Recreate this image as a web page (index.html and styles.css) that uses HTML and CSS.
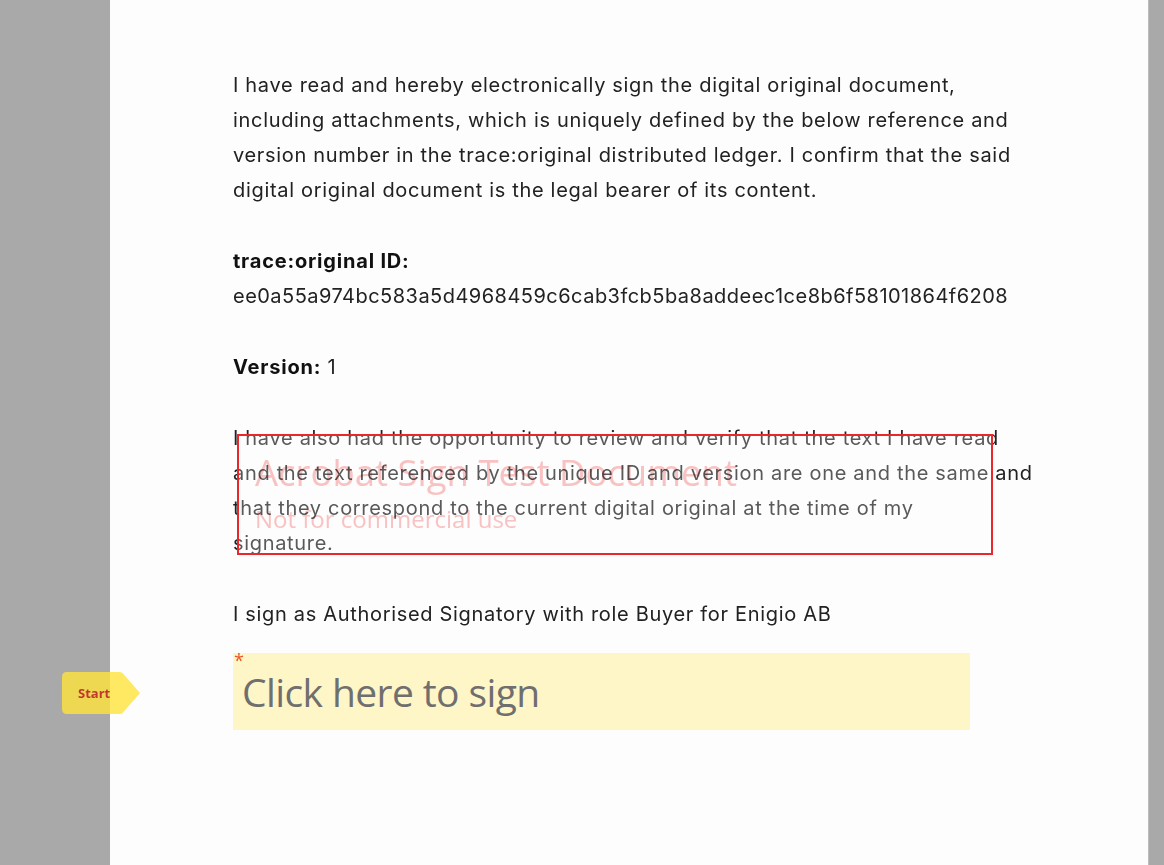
FILE: index.html
```html
<!DOCTYPE html>
<html lang="en">
<head>
  <meta charset="UTF-8">
  <title>Sign document</title>
  <link rel="stylesheet" href="styles.css">
</head>
<body>
<div class="viewer">
  <div class="page">
    <p class="doc-text">I have read and hereby electronically sign the digital original document,<br>including attachments, which is uniquely defined by the below reference and<br>version number in the trace:original distributed ledger. I confirm that the said<br>digital original document is the legal bearer of its content.</p>

    <p class="doc-text"><strong>trace:original ID:</strong><br><span class="hash">ee0a55a974bc583a5d4968459c6cab3fcb5ba8addeec1ce8b6f58101864f6208</span></p>

    <p class="doc-text"><strong>Version:</strong> 1</p>

    <div class="stamped">
      <p class="doc-text">I have also had the opportunity to review and verify that the text I have read<br>and the text referenced by the unique ID and version are one and the same and<br>that they correspond to the current digital original at the time of my<br>signature.</p>
      <!-- test watermark box -->
      <div class="stamp">
        <div class="stamp-title">Acrobat Sign Test Document</div>
        <div class="stamp-sub">Not for commercial use</div>
      </div>
    </div>

    <p class="doc-text">I sign as Authorised Signatory with role Buyer for Enigio AB</p>

    <div class="sign-row">
      <div class="start-tag">
        <svg width="78" height="42" viewBox="0 0 78 42"><path d="M5 0 H58 Q60 0 61 1.5 L78 21 L61 40.5 Q60 42 58 42 H5 Q0 42 0 37 V5 Q0 0 5 0 Z" fill="rgba(255,228,60,0.8)"/></svg>
        <span>Start</span>
      </div>
      <div class="sign-field">
        <span class="required">*</span>
        Click here to sign
      </div>
    </div>
  </div>
</div>
</body>
</html>
```

FILE: styles.css
```css
*, *::before, *::after { box-sizing: border-box; }
body { margin: 0; background: #a9a9a9; font-family: Inter, Roboto, sans-serif; color: #222; overflow: hidden; }
.viewer { display: flex; height: 865px; padding-left: 110px; }
.page { width: 1039px; background: #fdfdfd; border-right: 1px solid #bdbdbd; padding: 68px 0 0 123px; position: relative; }
.doc-text { margin: 0 0 36px; font-size: 20px; line-height: 35px; letter-spacing: 0.68px; white-space: nowrap; }
.doc-text strong { font-weight: 700; color: #111; letter-spacing: 0.8px; }
.hash { letter-spacing: 0.47px; }
.stamped { position: relative; }
.stamp { position: absolute; left: 4px; top: 13px; width: 756px; height: 121px; border: 2px solid #e8282b; background: rgba(255,255,255,0.25); padding: 14px 0 0 16px; font-family: "Open Sans", sans-serif; color: #fbc4c4; }
.stamp-title, .stamp-sub { mix-blend-mode: multiply; }
.stamp-title { font-size: 36.5px; line-height: 44px; }
.stamp-sub { font-size: 24px; line-height: 30px; margin-top: 10px; }
.sign-row { position: relative; margin-top: -15px; }
.sign-field { position: relative; width: 737px; height: 77px; background: #fff6c7; padding: 15px 0 0 9px; font-family: "Open Sans", sans-serif; font-size: 39px; line-height: 48px; color: #6f6f6f; letter-spacing: -0.6px; }
.required { position: absolute; left: 1px; top: -2px; font-size: 18px; line-height: 18px; color: #f0532a; letter-spacing: 0; }
.start-tag { position: absolute; left: -171px; top: 19px; width: 78px; height: 42px; display: flex; align-items: center; padding-left: 16px; }
.start-tag svg { position: absolute; left: 0; top: 0; }
.start-tag span { position: relative; font-family: "Open Sans", sans-serif; font-weight: 700; font-size: 13px; color: #c0392b; }
```
